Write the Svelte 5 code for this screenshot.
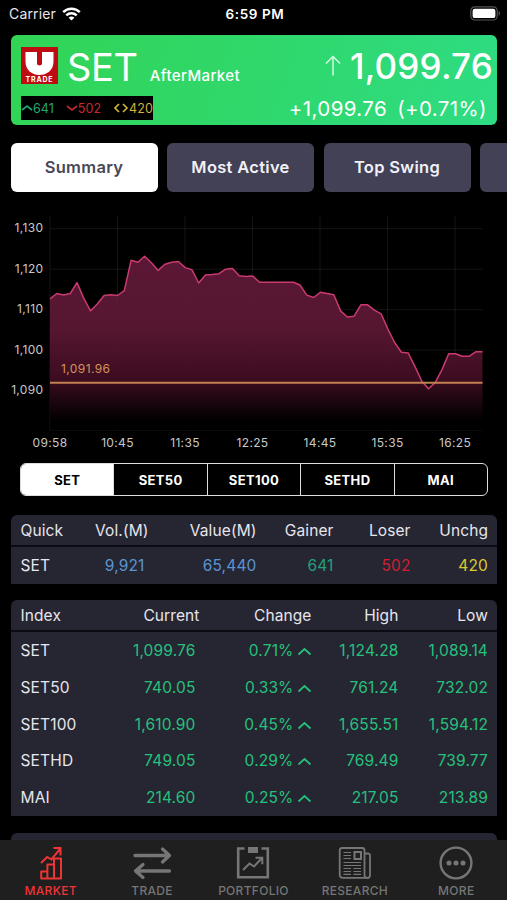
<script lang="ts">
  const tabs = ['Summary', 'Most Active', 'Top Swing', ''];
  const segments = ['SET', 'SET50', 'SET100', 'SETHD', 'MAI'];

  const indices = [
    { name: 'SET', current: '1,099.76', change: '0.71%', high: '1,124.28', low: '1,089.14' },
    { name: 'SET50', current: '740.05', change: '0.33%', high: '761.24', low: '732.02' },
    { name: 'SET100', current: '1,610.90', change: '0.45%', high: '1,655.51', low: '1,594.12' },
    { name: 'SETHD', current: '749.05', change: '0.29%', high: '769.49', low: '739.77' },
    { name: 'MAI', current: '214.60', change: '0.25%', high: '217.05', low: '213.89' },
  ];

  const series = [
    1112.7, 1114, 1113.6, 1114, 1116.7, 1112.8, 1109.7, 1111.4, 1113.5, 1113.7, 1113.5, 1114.7,
    1122.2, 1121.7, 1123.2, 1121.6, 1119.7, 1121.2, 1121.7, 1121.9, 1120.4, 1119.9, 1116.6,
    1118.6, 1118.7, 1118.9, 1120, 1120.2, 1118.4, 1118.2, 1118.3, 1116.8, 1116.8, 1116.8, 1116.8,
    1116.8, 1116.8, 1116.1, 1113.6, 1113, 1114.3, 1114, 1113.7, 1109.7, 1108.2, 1108.4, 1111.2,
    1111.2, 1109.9, 1109, 1105.2, 1101.9, 1099.5, 1099.3, 1096, 1092.4, 1090.5, 1092, 1095.2,
    1099.1, 1099.1, 1098.5, 1098.5, 1099.6, 1099.6,
  ];
  const times = ['09:58', '10:45', '11:35', '12:25', '14:45', '15:35', '16:25'];
  const levels = [1130, 1120, 1110, 1100, 1090];
  const prior = 1091.96;

  // plot area inside the 507x250 chart
  const left = 50;
  const right = 482.5;
  const top = 11;
  const bottom = 225.5;

  const x = (i: number) => left + (i * (right - left)) / (series.length - 1);
  const y = (v: number) => 23.7 + (1130 - v) * 4.05;

  const line = series.map((v, i) => `${x(i).toFixed(1)},${y(v).toFixed(1)}`).join(' ');
  const area = `${left},${bottom} ${line} ${right},${bottom}`;
</script>

<div class="screen">
  <header class="status">
    <div class="carrier">
      <span>Carrier</span>
      <svg width="19" height="14" viewBox="0 0 19 14" fill="none" stroke="#fff" stroke-width="2.5">
        <path d="M1.2 5.2C5.8.6 13.2.6 17.8 5.2" />
        <path d="M4.3 8.4c2.9-2.8 7.5-2.8 10.4 0" />
        <path d="M9.5 13.6 6.6 10.7c1.6-1.5 4.2-1.5 5.8 0z" fill="#fff" stroke="none" />
      </svg>
    </div>
    <span class="clock">6:59 PM</span>
    <svg class="battery" width="31" height="15" viewBox="0 0 31 15">
      <rect x="0.8" y="0.8" width="26.4" height="13.2" rx="4" fill="none" stroke="#555557" stroke-width="1.2" />
      <rect x="2.6" y="2.7" width="22.8" height="9.4" rx="2.2" fill="#fff" />
      <path d="M28.6 5v4.8c1.9-.6 1.9-4.2 0-4.8z" fill="#555557" />
    </svg>
  </header>

  <section class="quote">
    <div class="quote-left">
      <div class="title">
        <div class="logo">
          <svg width="37" height="37" viewBox="0 0 37 37">
            <path d="M4.500 5h11.500v11.500c0 2.500 5 2.500 5 0V5h11.500v9.500c0 18-28 18-28 0z" fill="#fff" />
          </svg>
          <span>TRADE</span>
        </div>
        <h1>SET</h1>
        <span class="phase">AfterMarket</span>
      </div>
      <div class="breadth">
        <span class="up"><svg width="12" height="8" viewBox="0 0 12 8"><path d="M1 6l5-4 5 4" /></svg>641</span>
        <span class="down"><svg width="12" height="8" viewBox="0 0 12 8"><path d="M1 2l5 4 5-4" /></svg>502</span>
        <span class="flat"><svg width="16" height="10" viewBox="0 0 16 10"><path d="M6 1L2 5l4 4M10 1l4 4-4 4" /></svg>420</span>
      </div>
    </div>
    <div class="quote-right">
      <div class="price">
        <svg width="18" height="22" viewBox="0 0 18 22" fill="none" stroke="#dcfbe8" stroke-width="1.4">
          <path d="M9 20.5V2M2 8.5 9 1.5 16 8.5" />
        </svg>
        <span>1,099.76</span>
      </div>
      <div class="delta"><span>+1,099.76</span><span>(+0.71%)</span></div>
    </div>
  </section>

  <nav class="tabs">
    {#each tabs as tab, i}
      <div class="tab" class:active={i === 0}>{tab}</div>
    {/each}
  </nav>

  <svg class="chart" width="507" height="250" viewBox="0 0 507 250">
    <defs>
      <linearGradient id="fill" gradientUnits="userSpaceOnUse" x1="0" y1="50" x2="0" y2="216">
        <stop offset="0" stop-color="#60193a" />
        <stop offset="0.45" stop-color="#5b1733" />
        <stop offset="0.75" stop-color="#400d22" />
        <stop offset="1" stop-color="#000" />
      </linearGradient>
    </defs>
    <g class="grid">
      {#each levels.slice(0, 4) as level}
        <line x1={left} x2={right} y1={y(level)} y2={y(level)} />
      {/each}
      {#each times as _, i}
        <line x1={left + i * 67.5} x2={left + i * 67.5} y1={top} y2={bottom} />
      {/each}
      <line x1={left} x2={right} y1={bottom} y2={bottom} />
    </g>
    <polygon points={area} fill="url(#fill)" fill-opacity="0.94" />
    <polyline points={line} fill="none" stroke="#c93a70" stroke-width="1.5" stroke-linejoin="round" />
    <line x1={left} x2={right} y1={y(prior)} y2={y(prior)} stroke="#c4804f" stroke-width="2" />
    <text class="prior" x="61" y="168">1,091.96</text>
    {#each levels as level}
      <text class="axis" x="43.5" y={y(level) + 3.7} text-anchor="end">{level.toLocaleString('en-US')}</text>
    {/each}
    {#each times as time, i}
      <text class="axis" x={left + i * 67.5} y="241.5" text-anchor="middle">{time}</text>
    {/each}
  </svg>

  <div class="segments">
    {#each segments as segment, i}
      <div class="segment" class:active={i === 0}>{segment}</div>
    {/each}
  </div>

  <section class="card quick">
    <div class="row head">
      <span>Quick</span><span>Vol.(M)</span><span>Value(M)</span><span>Gainer</span><span>Loser</span><span>Unchg</span>
    </div>
    <div class="row">
      <span>SET</span>
      <span class="blue vol">9,921</span>
      <span class="blue">65,440</span>
      <span class="gain">641</span>
      <span class="loss">502</span>
      <span class="same">420</span>
    </div>
  </section>

  <section class="card index">
    <div class="row head">
      <span>Index</span><span>Current</span><span>Change</span><span>High</span><span>Low</span>
    </div>
    {#each indices as item}
      <div class="row">
        <span>{item.name}</span>
        <span class="green current">{item.current}</span>
        <span class="green">{item.change}<svg width="15" height="9" viewBox="0 0 15 9"><path d="M1.5 7.5l6-5.5 6 5.5" /></svg></span>
        <span class="green">{item.high}</span>
        <span class="green">{item.low}</span>
      </div>
    {/each}
  </section>

  <div class="card peek"></div>

  <footer class="tabbar">
    <div class="item active">
      <svg width="38" height="36" viewBox="0 0 38 36" fill="none" stroke="currentColor" stroke-width="2">
        <path d="M9.2 33.5v-7h6.200v7zM15.400 33.500V19.500h6.600v14zM22 33.500V13.500h7v20z" stroke-linejoin="round" />
        <path d="M9 18l6.200-6 4.200 2.500 8.600-10.500M21.500 3h7v7.500" />
      </svg>
      <span>MARKET</span>
    </div>
    <div class="item">
      <svg width="42" height="36" viewBox="0 0 42 36" fill="none" stroke="currentColor" stroke-width="3.3" stroke-linecap="round" stroke-linejoin="round">
        <path d="M4 10.500h34M31.500 4l7 6.500-7 6.500M38.500 26h-34M12 19.500l-7.500 6.500 7.500 6.500" />
      </svg>
      <span>TRADE</span>
    </div>
    <div class="item">
      <svg width="38" height="36" viewBox="0 0 38 36" fill="none" stroke="currentColor">
        <path d="M10.500 3.500H4.200v28.800h29.600V3.500H27.500" stroke-width="2.600" />
        <path d="M14 2h10v6H14z" fill="currentColor" stroke="none" />
        <path d="M9 25l6.500-6.500 4.500 3 8-8.500M21.500 12.800h6.800v6.500" stroke-width="2" />
      </svg>
      <span>PORTFOLIO</span>
    </div>
    <div class="item">
      <svg width="38" height="36" viewBox="0 0 38 36" fill="none" stroke="currentColor" stroke-width="1.8">
        <path d="M30.5 32.8H7.2C5 32.8 3.7 31.5 3.7 29.5V5.5c0-1.6.8-2.5 2.5-2.5H26c1.7 0 2.5.9 2.5 2.5v24.5c0 4 5.5 4 5.5 0V10.5c0-1.4-.8-2-2-2h-3.5" />
        <path d="M18.5 7h6.500v7h-6.500z" stroke-width="2" />
        <path d="M7.5 7.5h7.5M7.5 10.5h7.5M7.5 13.5h7.5M7.5 17.5h17.5M7.5 20.5h17.5M7.5 23.5h7.5M17.5 23.5h7.5M7.5 26.5h7.5M17.5 26.5h7.5M7.5 29.3h7.5M17.5 29.3h7.5" stroke-width="1.2" />
      </svg>
      <span>RESEARCH</span>
    </div>
    <div class="item">
      <svg width="36" height="36" viewBox="0 0 36 36">
        <circle cx="18" cy="18" r="15.4" fill="none" stroke="currentColor" stroke-width="2.4" />
        <g fill="currentColor">
          <circle cx="11" cy="18" r="2.5" />
          <circle cx="18" cy="18" r="2.5" />
          <circle cx="25" cy="18" r="2.5" />
        </g>
      </svg>
      <span>MORE</span>
    </div>
  </footer>
</div>

<style>
  :global(body) {
    margin: 0;
    background: #000;
  }

  .screen {
    width: 507px;
    height: 900px;
    overflow: hidden;
    display: flex;
    flex-direction: column;
    background: #000;
    color: #e6e6ec;
    font-family: Inter, 'Liberation Sans', sans-serif;
    box-sizing: border-box;
  }

  .screen > * {
    flex-shrink: 0;
    box-sizing: border-box;
  }

  .status {
    height: 35px;
    padding: 0 6px 8px 9px;
    display: grid;
    grid-template-columns: 1fr auto 1fr;
    align-items: center;
    font-size: 14px;
  }

  .carrier {
    display: flex;
    align-items: center;
    gap: 6px;
    letter-spacing: 0.15px;
  }

  .clock {
    font-weight: 600;
    font-size: 13.5px;
    letter-spacing: 0.6px;
    color: #fff;
  }

  .battery {
    justify-self: end;
  }

  .quote {
    height: 90px;
    margin: 0 10px 0 11px;
    padding: 12px 4px 0 10px;
    display: flex;
    justify-content: space-between;
    border-radius: 6px;
    background: linear-gradient(110deg, #31d454, #2edc83);
    color: #fff;
  }

  .title {
    display: flex;
    align-items: baseline;
    height: 49px;
  }

  .logo {
    align-self: flex-start;
    display: grid;
    width: 37px;
    height: 37px;
    margin-right: 9px;
    background: #bd0d12;
  }

  .logo svg,
  .logo span {
    grid-area: 1 / 1;
  }

  .logo span {
    align-self: end;
    justify-self: center;
    font-size: 7px;
    line-height: 9px;
    font-weight: 700;
    letter-spacing: 0.8px;
  }

  h1 {
    margin: 0 12px 0 0;
    font-size: 38px;
    font-weight: 400;
    line-height: 40px;
    letter-spacing: -0.3px;
  }

  .phase {
    font-size: 15px;
    font-weight: 500;
    letter-spacing: 0.4px;
  }

  .breadth {
    display: flex;
    justify-content: space-between;
    align-items: center;
    width: 132px;
    height: 24px;
    background: #000;
    font-size: 12.5px;
    letter-spacing: 0.1px;
  }

  .breadth span {
    display: flex;
    align-items: center;
  }

  .breadth path,
  .row path {
    fill: none;
    stroke: currentColor;
    stroke-width: 1.7;
  }

  .up {
    color: #20a873;
  }

  .down {
    color: #c22a2f;
  }

  .flat {
    color: #d0b239;
  }

  .quote-right {
    display: flex;
    flex-direction: column;
    align-items: flex-end;
  }

  .price {
    display: flex;
    align-items: center;
    gap: 8px;
    height: 38px;
    font-size: 35px;
    font-weight: 500;
    letter-spacing: 0.2px;
  }

  .delta {
    display: flex;
    gap: 10px;
    margin: 10px 6px 0 0;
    font-size: 20.5px;
    line-height: 27px;
    letter-spacing: 0.4px;
  }

  .tabs {
    display: flex;
    gap: 9.5px;
    height: 49px;
    margin: 17.5px 0 0 10.5px;
    overflow: hidden;
  }

  .tab {
    flex: 0 0 147px;
    display: flex;
    align-items: center;
    justify-content: center;
    border-radius: 6px;
    background: #424155;
    color: #f1f0f8;
    font-size: 16.5px;
    font-weight: 600;
    letter-spacing: 0.3px;
  }

  .tab.active {
    background: #fff;
    color: #484756;
  }

  .chart {
    display: block;
    margin-top: 13.5px;
  }

  .grid line {
    stroke: #fff;
    stroke-opacity: 0.08;
  }

  .axis {
    fill: #c8c8c8;
    font-size: 12px;
    letter-spacing: 0.35px;
  }

  .prior {
    fill: #d3955a;
    font-size: 12px;
    letter-spacing: 0.4px;
  }

  .segments {
    display: flex;
    height: 33px;
    margin: 8px 19px 0 20px;
    border: 1px solid #ddd;
    border-radius: 6px;
    overflow: hidden;
  }

  .segment {
    flex: 1;
    display: flex;
    align-items: center;
    justify-content: center;
    color: #fff;
    font-size: 13px;
    font-weight: 700;
    letter-spacing: 0.35px;
  }

  .segment + .segment {
    border-left: 1px solid #ddd;
  }

  .segment.active {
    background: #fff;
    color: #000;
  }

  .card {
    margin: 0 10px 0 11px;
    border-radius: 6px 6px 0 0;
    background: #262532;
  }

  .quick {
    margin-top: 19px;
    height: 69px;
  }

  .index {
    margin-top: 16px;
    height: 216px;
  }

  .row {
    display: grid;
    align-items: center;
    height: 36.7px;
    padding: 1px 9px 0 9.5px;
    box-sizing: border-box;
    font-size: 15.5px;
    letter-spacing: 0.15px;
  }

  .row.head {
    height: 32px;
    border-bottom: 2px solid #0b0b13;
    letter-spacing: 0.1px;
  }

  .quick .row {
    grid-template-columns: 60px 68px 108px 77px 77px 1fr;
  }

  .index .row {
    grid-template-columns: 80px 99px 112px 87px 1fr;
  }

  .row span + span {
    text-align: right;
  }

  .row .vol,
  .row .current {
    padding-right: 4px;
  }

  .row svg {
    margin-left: 3px;
  }

  .blue {
    color: #5a95d2;
  }

  .gain {
    color: #20a37a;
  }

  .loss {
    color: #d01f30;
  }

  .same {
    color: #dccb2f;
  }

  .green {
    color: #25c17d;
  }

  .peek {
    height: 7px;
    margin-top: 17px;
  }

  .tabbar {
    display: grid;
    grid-template-columns: repeat(5, 1fr);
    height: 60px;
    padding-top: 5px;
    background: #1f1f1f;
    color: #767676;
  }

  .item {
    display: flex;
    flex-direction: column;
    align-items: center;
    font-size: 12px;
    font-weight: 500;
    line-height: 15px;
    letter-spacing: 0.3px;
  }

  .item span {
    margin-top: 2px;
  }

  .item.active {
    color: #ee3435;
  }
</style>
